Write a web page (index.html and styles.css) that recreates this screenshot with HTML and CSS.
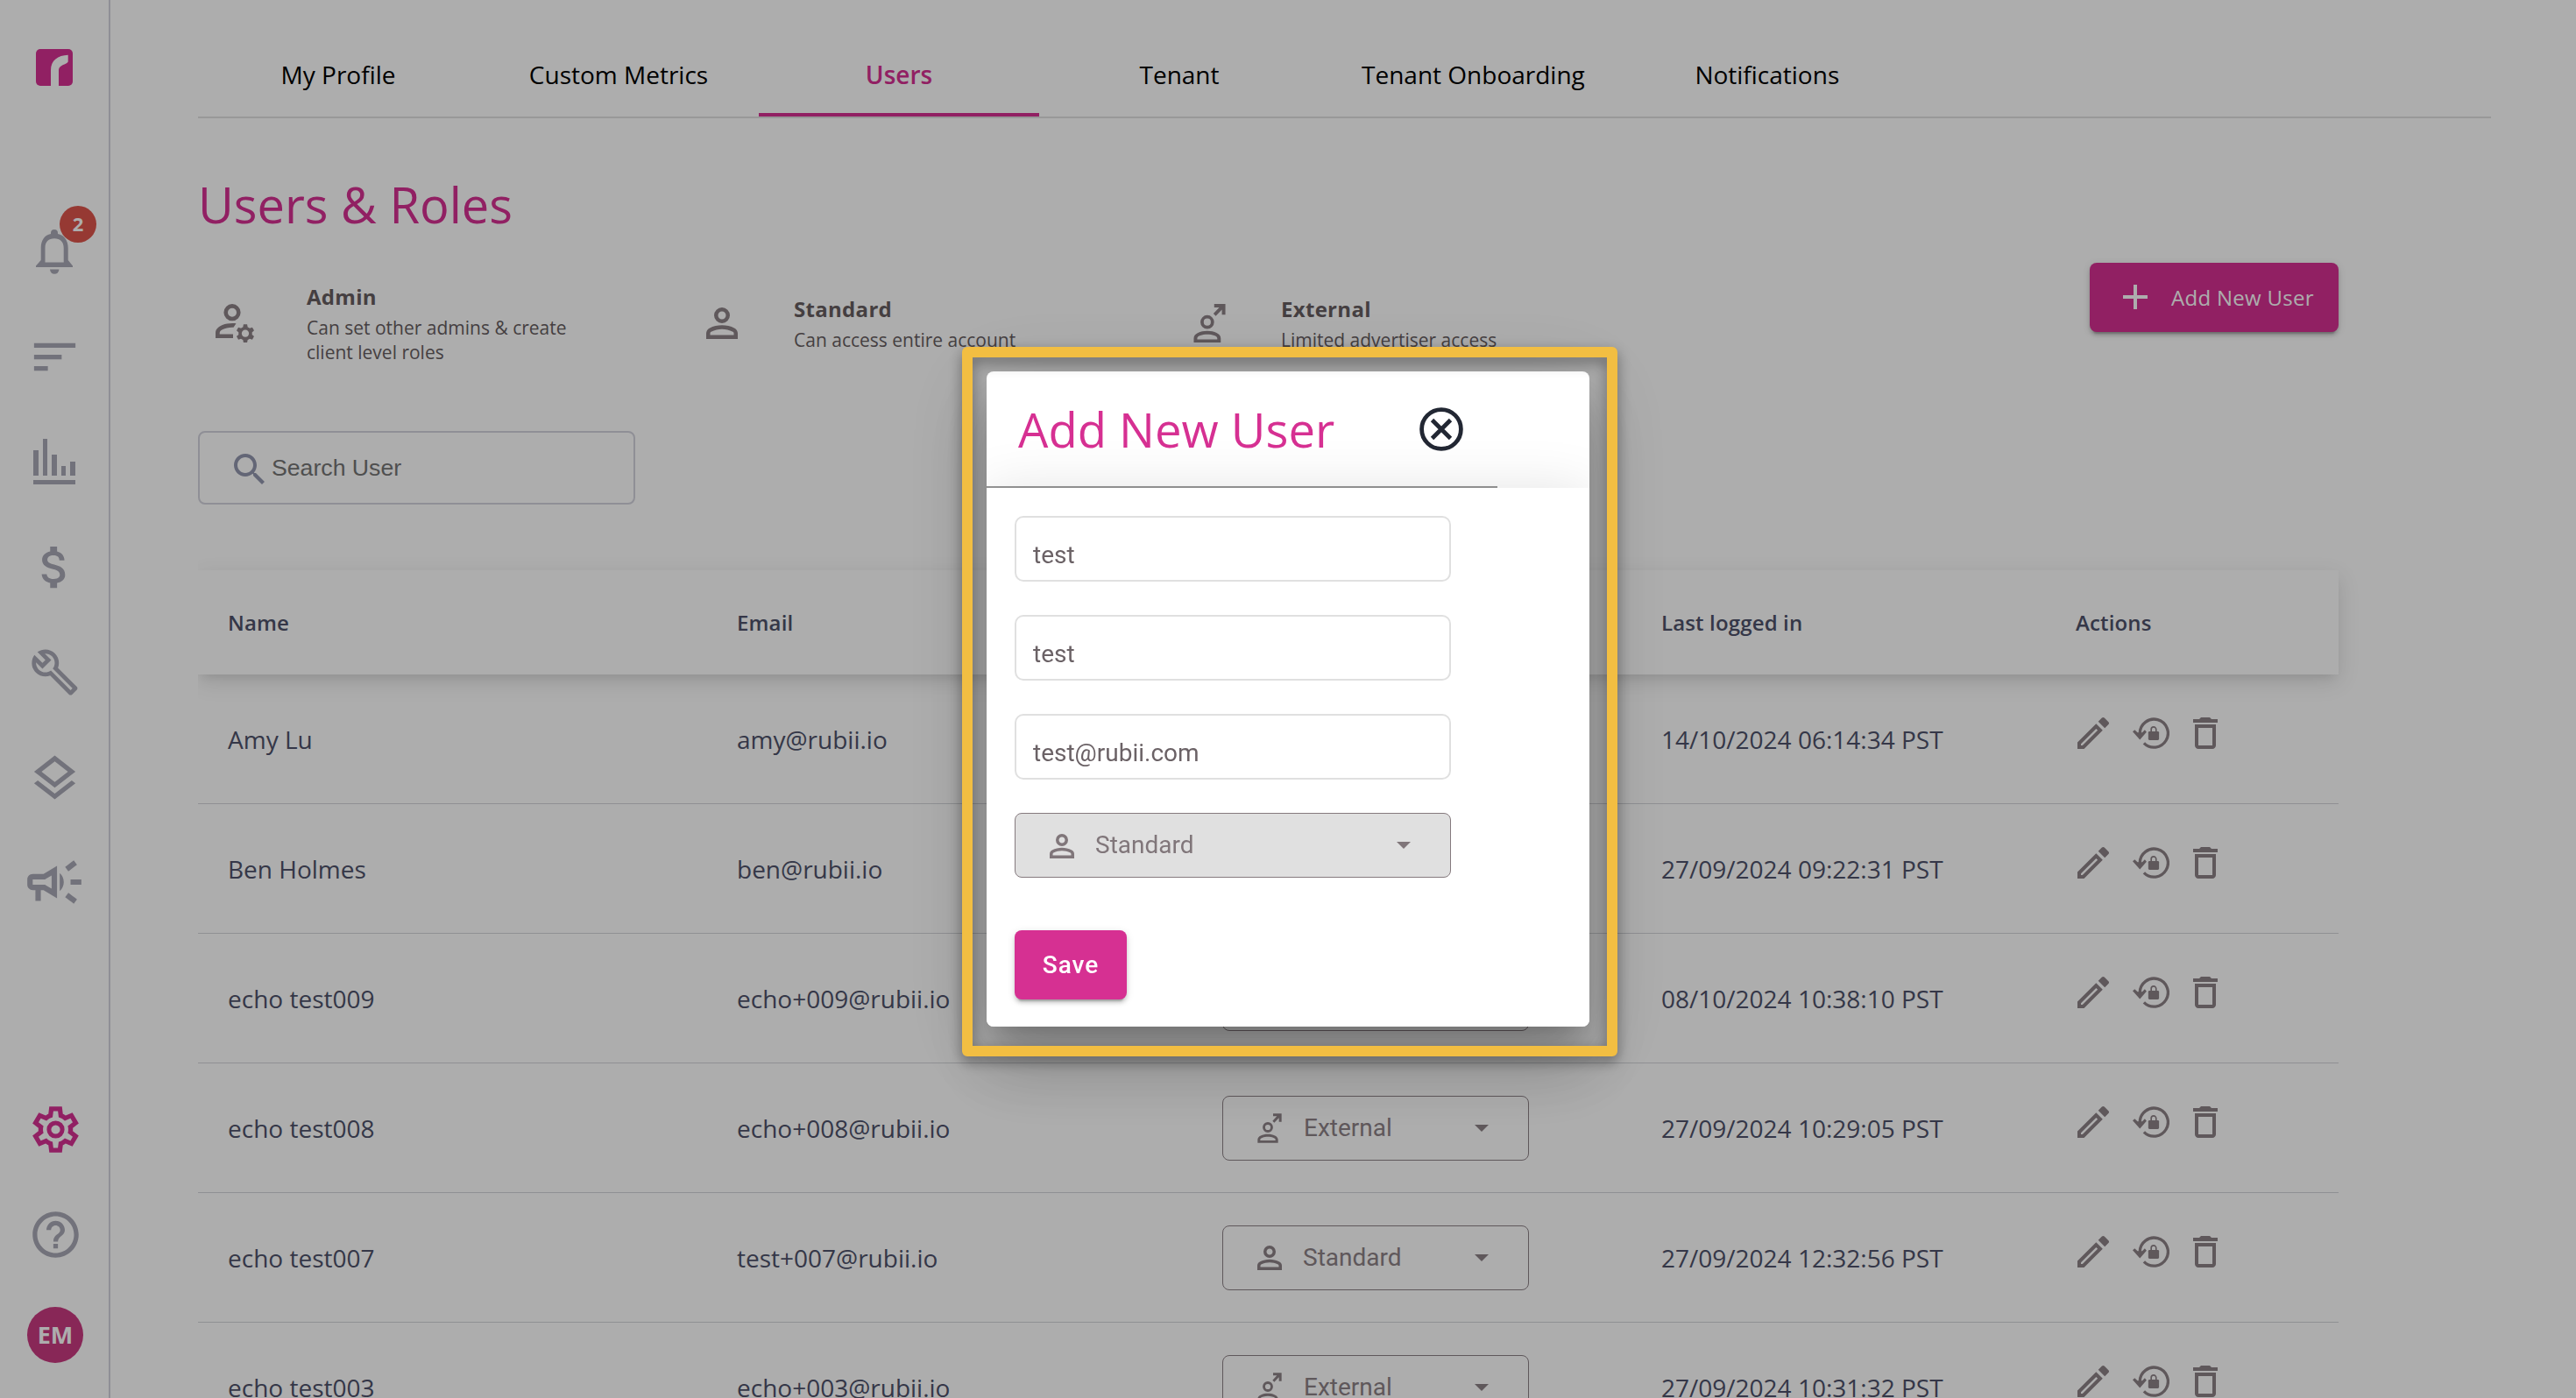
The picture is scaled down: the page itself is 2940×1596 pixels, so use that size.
FILE: index.html
```html
<!DOCTYPE html>
<html lang="en">
<head>
  <meta charset="utf-8">
  <title>Users &amp; Roles</title>
  <link rel="stylesheet" href="styles.css">
</head>
<body>
  <!-- Shared icons -->
  <svg class="sprite">
    <symbol id="person" viewBox="160 -800 640 640"><path d="M480-480q-66 0-113-47t-47-113q0-66 47-113t113-47q66 0 113 47t47 113q0 66-47 113t-113 47ZM160-160v-112q0-34 17.5-62.5T224-378q62-31 126-46.5T480-440q66 0 130 15.5T736-378q29 15 46.5 43.5T800-272v112H160Zm80-80h480v-32q0-11-5.5-20T700-306q-54-27-109-40.5T480-360q-56 0-111 13.5T260-306q-9 5-14.5 14t-5.5 20v32Zm240-320q33 0 56.5-23.5T560-640q0-33-23.5-56.5T480-720q-33 0-56.5 23.5T400-640q0 33 23.5 56.5T480-560Z"/></symbol>
    <symbol id="external" viewBox="0 0 84 100">
      <path d="M54 0H83V28H74V15L58 31L52 25L67 9H54Z"/>
      <circle cx="36" cy="47" r="13.5" fill="none" stroke="currentColor" stroke-width="8.5"/>
      <path fill-rule="evenodd" d="M1 100V89C1 77 18 70 36 70S71 77 71 89V100ZM10 92H62V89C62 83 49 79 36 79S10 83 10 89Z"/>
    </symbol>
    <symbol id="edit" viewBox="3 3 18 18"><path d="M3 17.250V21h3.750L17.400 10.350l-3.750-3.750zM5.900 19H5v-.9l8.650-8.650.9.900zM17.660 3c-.25 0-.51.1-.7.29l-2.100 2.100 3.750 3.750 2.100-2.100c.39-.39.39-1.020 0-1.410l-2.340-2.340c-.2-.2-.45-.29-.71-.29z" fill-rule="evenodd"/></symbol>
    <symbol id="reset" viewBox="0 0 127 108">
      <path fill="none" stroke="currentColor" stroke-width="10" d="M25 66V54A48.500 48.500 0 1 1 39 88.500"/>
      <path d="M0 49L7 43L17 52H33L42 43L48 50L25 77Z"/>
      <rect x="54" y="48" width="37" height="30" rx="4"/>
      <path fill="none" stroke="currentColor" stroke-width="5" d="M64 50V41a8.500 8.500 0 0 1 17 0V50"/>
    </symbol>
    <symbol id="trash" viewBox="5 3 14 18"><path d="M6 19c0 1.1.9 2 2 2h8c1.1 0 2-.9 2-2V7H6v12zM8 9h8v10H8V9zm7.500-5l-1-1h-5l-1 1H5v2h14V4z"/></symbol>
  </svg>

  <div class="page">
    <aside class="sidebar">
      <svg class="logo" viewBox="0 0 42 42"><rect width="42" height="42" rx="5"/><path fill="#fff" d="M17 42V24C17 13 25 7 36.700 6.700V14.500C35 17 33 17 31 18C28 19.500 26 21 26 24V42Z"/></svg>
      <div class="bell">
        <svg viewBox="0 0 42 51"><path fill-rule="evenodd" d="M0 43V41.500L5.700 35V21C5.700 12 10 6.500 17 5V4a4 4 0 0 1 8 0V5C32 6.500 36.700 12 36.700 21V35L42 41.500V43ZM10.500 37.500H31.700V21C31.700 14 27.500 10.300 21 10.300S10.500 14 10.500 21Z"/><path d="M16 45.500h10.400a5.200 5.200 0 0 1-10.400 0z"/></svg>
        <span class="badge">2</span>
      </div>
      <nav class="side-nav">
        <a><svg viewBox="0 0 24 24"><path d="M3 18h6v-2H3v2zM3 6v2h18V6H3zm0 7h12v-2H3v2z"/></svg></a>
        <a><svg class="chart" viewBox="0 0 48 52"><path d="M0 13h6v29H0zM11 0h5v42h-5zM21 18h6v24h-6zM32 31h5v11h-5zM42 26h6v16h-6zM0 47h48v5H0z"/></svg></a>
        <a><svg viewBox="0 0 24 24"><path d="M11.800 10.900c-2.270-.59-3-1.200-3-2.150 0-1.090 1.010-1.850 2.700-1.850 1.780 0 2.440.85 2.500 2.100h2.210c-.07-1.720-1.120-3.300-3.210-3.810V3h-3v2.160c-1.940.42-3.500 1.680-3.500 3.610 0 2.310 1.910 3.460 4.700 4.130 2.500.6 3 1.480 3 2.410 0 .69-.49 1.790-2.700 1.790-2.060 0-2.870-.92-2.980-2.100h-2.200c.12 2.190 1.760 3.420 3.680 3.830V21h3v-2.150c1.950-.37 3.500-1.500 3.500-3.550 0-2.840-2.430-3.810-4.700-4.400z"/></svg></a>
        <a><svg class="wrench" viewBox="0 0 24 24"><path d="M22.610 18.990l-9.080-9.080c.93-2.340.45-5.100-1.440-7C9.790.61 6.210.4 3.660 2.260L7.500 6.110 6.080 7.520 2.250 3.690C.39 6.230.6 9.820 2.900 12.110c1.860 1.860 4.570 2.350 6.890 1.480l9.110 9.110c.39.39 1.020.39 1.410 0l2.300-2.300c.4-.38.4-1.010 0-1.410zm-3 1.600l-9.460-9.460c-.61.45-1.290.72-2 .82-1.360.2-2.790-.21-3.830-1.250C3.370 9.760 2.930 8.500 3 7.260l3.090 3.090 4.240-4.240-3.090-3.090c1.240-.07 2.490.37 3.440 1.310 1.080 1.080 1.490 2.570 1.240 3.960-.12.71-.42 1.370-.88 1.960l9.450 9.450-.88.89z"/></svg></a>
        <a><svg viewBox="0 -.5 24 24"><path d="M11.990 18.540l-7.370-5.730L3 14.070l9 7 9-7-1.630-1.270-7.380 5.740zM12 16l7.360-5.730L21 9l-9-7-9 7 1.630 1.270L12 16zm0-11.470L17.740 9 12 13.470 6.260 9 12 4.530z"/></svg></a>
        <a><svg class="campaign" viewBox="0 0 24 24"><path d="M18 11v2h4v-2h-4zm-2 6.610c.96.71 2.210 1.650 3.200 2.390.4-.53.8-1.070 1.200-1.600-.99-.74-2.240-1.680-3.200-2.400-.4.54-.8 1.080-1.200 1.610zM20.400 5.600c-.4-.53-.8-1.070-1.200-1.600-.99.74-2.240 1.680-3.200 2.400.4.53.8 1.070 1.200 1.600.96-.72 2.210-1.650 3.200-2.400zM4 9c-1.100 0-2 .9-2 2v2c0 1.100.9 2 2 2h1v4h2v-4h1l5 3V6L8 9H4zm5.030 1.710L11 9.530v4.940l-1.970-1.180-.48-.29H4v-2h4.550l.48-.29zM15.500 12c0-1.330-.58-2.530-1.500-3.350v6.690c.92-.81 1.500-2.010 1.500-3.340z"/></svg></a>
      </nav>
      <nav class="side-nav side-nav-bottom">
        <a class="active"><svg viewBox="0 -960 960 960"><path fill-rule="evenodd" d="m370-80-16-128q-13-5-24.500-12T307-235l-119 50L78-375l103-78q-1-7-1-13.500v-27q0-6.500 1-13.500L78-585l110-190 119 50q11-8 23-15t24-12l16-128h220l16 128q13 5 24.500 12t22.500 15l119-50 110 190-103 78q1 7 1 13.500v27q0 6.500-2 13.500l103 78-110 190-118-50q-11 8-23 15t-24 12L590-80H370Zm70-80h79l14-106q31-8 57.500-23.500T639-327l99 41 39-68-86-65q5-14 7-29.500t2-31.500q0-16-2-31.500t-7-29.500l86-65-39-68-99 42q-22-23-48.500-38.500T533-694l-13-106h-79l-14 106q-31 8-57.500 23.500T321-633l-99-41-39 68 86 64q-5 15-7 30t-2 32q0 16 2 31t7 30l-86 65 39 68 99-42q22 23 48.500 38.500T427-266l13 106Z"/><circle cx="480" cy="-480" r="116" fill="none" stroke="currentColor" stroke-width="76"/></svg></a>
        <a><svg viewBox="0 0 24 24"><path d="M11 18h2v-2h-2v2zm1-16C6.480 2 2 6.480 2 12s4.480 10 10 10 10-4.480 10-10S17.520 2 12 2zm0 18c-4.410 0-8-3.590-8-8s3.590-8 8-8 8 3.590 8 8-3.590 8-8 8zm0-14c-2.210 0-4 1.790-4 4h2c0-1.100.9-2 2-2s2 .9 2 2c0 2-3 1.750-3 5h2c0-2.250 3-2.500 3-5 0-2.210-1.790-4-4-4z"/></svg></a>
      </nav>
      <div class="avatar">EM</div>
    </aside>

    <main class="content">
      <nav class="tabs">
        <a class="tab">My Profile</a>
        <a class="tab">Custom Metrics</a>
        <a class="tab selected">Users</a>
        <a class="tab">Tenant</a>
        <a class="tab">Tenant Onboarding</a>
        <a class="tab">Notifications</a>
      </nav>

      <h1>Users &amp; Roles</h1>

      <div class="top-row">
        <div class="roles">
          <div class="role">
            <div class="role-icon">
              <svg width="44" height="44" viewBox="0 0 44 44">
                <circle cx="19" cy="9.700" r="7.300" fill="none" stroke="currentColor" stroke-width="4.600"/>
                <path d="M23.500 22.200C10 21 0 26 0 33V39H20V34.400H4.700V33C4.700 29.500 13 26.300 20.500 26.800Z"/>
                <path transform="translate(-1.200 .6) scale(2.070)" d="M20.750 16c0-.22-.03-.42-.06-.63l1.140-1.010-1-1.730-1.450.49c-.32-.27-.68-.48-1.080-.63L18 11h-2l-.3 1.490c-.4.15-.76.36-1.080.63l-1.450-.49-1 1.730 1.140 1.010c-.03.21-.06.41-.06.63s.03.42.06.63l-1.140 1.010 1 1.730 1.450-.49c.32.27.68.48 1.080.63L16 21h2l.3-1.490c.4-.15.76-.36 1.080-.63l1.450.49 1-1.730-1.140-1.010c.03-.21.06-.41.06-.63zM17 18c-1.100 0-2-.9-2-2s.9-2 2-2 2 .9 2 2-.9 2-2 2z"/>
              </svg>
            </div>
            <div>
              <h3>Admin</h3>
              <p>Can set other admins &amp; create<br>client level roles</p>
            </div>
          </div>
          <div class="role">
            <div class="role-icon"><svg width="36" height="36"><use href="#person"/></svg></div>
            <div>
              <h3>Standard</h3>
              <p>Can access entire account</p>
            </div>
          </div>
          <div class="role">
            <div class="role-icon"><svg width="37" height="44"><use href="#external"/></svg></div>
            <div>
              <h3>External</h3>
              <p>Limited advertiser access</p>
            </div>
          </div>
        </div>
        <button class="add-btn">
          <svg width="28" height="28" viewBox="0 0 28 28"><path d="M12 0h4v12h12v4H16v12h-4V16H0v-4h12z"/></svg>
          Add New User
        </button>
      </div>

      <div class="search">
        <svg width="48" height="48" viewBox="0 0 24 24"><path d="M15.500 14h-.79l-.28-.27C15.410 12.590 16 11.110 16 9.500 16 5.910 13.090 3 9.500 3S3 5.910 3 9.500 5.910 16 9.500 16c1.610 0 3.090-.59 4.230-1.570l.27.28v.79l5 4.990L20.490 19l-4.990-5zm-6 0C7.010 14 5 11.990 5 9.500S7.010 5 9.500 5 14 7.010 14 9.500 11.990 14 9.500 14z"/></svg>
        <span>Search User</span>
      </div>

      <div class="table">
        <div class="row head">
          <div>Name</div><div>Email</div><div></div><div>Last logged in</div><div>Actions</div>
        </div>
        <div class="row">
          <div>Amy Lu</div><div>amy@rubii.io</div><div></div><div>14/10/2024 06:14:34 PST</div>
          <div class="actions"><svg class="edit"><use href="#edit"/></svg><svg class="reset"><use href="#reset"/></svg><svg class="trash"><use href="#trash"/></svg></div>
        </div>
        <div class="row">
          <div>Ben Holmes</div><div>ben@rubii.io</div><div></div><div>27/09/2024 09:22:31 PST</div>
          <div class="actions"><svg class="edit"><use href="#edit"/></svg><svg class="reset"><use href="#reset"/></svg><svg class="trash"><use href="#trash"/></svg></div>
        </div>
        <div class="row">
          <div>echo test009</div><div>echo+009@rubii.io</div>
          <div><div class="select"></div></div>
          <div>08/10/2024 10:38:10 PST</div>
          <div class="actions"><svg class="edit"><use href="#edit"/></svg><svg class="reset"><use href="#reset"/></svg><svg class="trash"><use href="#trash"/></svg></div>
        </div>
        <div class="row">
          <div>echo test008</div><div>echo+008@rubii.io</div>
          <div><div class="select"><svg class="ext"><use href="#external"/></svg><span>External</span><i class="caret"></i></div></div>
          <div>27/09/2024 10:29:05 PST</div>
          <div class="actions"><svg class="edit"><use href="#edit"/></svg><svg class="reset"><use href="#reset"/></svg><svg class="trash"><use href="#trash"/></svg></div>
        </div>
        <div class="row">
          <div>echo test007</div><div>test+007@rubii.io</div>
          <div><div class="select"><svg class="std"><use href="#person"/></svg><span>Standard</span><i class="caret"></i></div></div>
          <div>27/09/2024 12:32:56 PST</div>
          <div class="actions"><svg class="edit"><use href="#edit"/></svg><svg class="reset"><use href="#reset"/></svg><svg class="trash"><use href="#trash"/></svg></div>
        </div>
        <div class="row">
          <div>echo test003</div><div>echo+003@rubii.io</div>
          <div><div class="select"><svg class="ext"><use href="#external"/></svg><span>External</span><i class="caret"></i></div></div>
          <div>27/09/2024 10:31:32 PST</div>
          <div class="actions"><svg class="edit"><use href="#edit"/></svg><svg class="reset"><use href="#reset"/></svg><svg class="trash"><use href="#trash"/></svg></div>
        </div>
      </div>
    </main>
  </div>

  <div class="overlay">
    <div class="dialog">
      <div class="dialog-header">
        <h2>Add New User</h2>
        <svg class="close" width="50" height="50" viewBox="0 0 50 50"><circle cx="25" cy="25" r="22.400"/><path d="M14.500 14.500l21 21m0-21l-21 21"/></svg>
      </div>
      <div class="dialog-body">
        <div class="field">test</div>
        <div class="field">test</div>
        <div class="field">test@rubii.com</div>
        <div class="select disabled"><svg class="std"><use href="#person"/></svg><span>Standard</span><i class="caret"></i></div>
        <button class="save-btn">Save</button>
      </div>
    </div>
    <div class="highlight"></div>
  </div>
</body>
</html>
```
FILE: styles.css
```css
* {
  box-sizing: border-box;
}
body {
  margin: 0;
  height: 1596px;
  overflow: hidden;
  background: #fff;
  font-family: "Open Sans", "Noto Sans", sans-serif;
  color: #4e526a;
}
h1, h2, h3, p {
  margin: 0;
}
svg {
  display: block;
  fill: currentColor;
  flex: none;
}
.sprite {
  position: absolute;
  width: 0;
  height: 0;
}
.page {
  display: flex;
  height: 1596px;
  overflow: hidden;
}

/* Sidebar */
.sidebar {
  display: flex;
  flex-direction: column;
  align-items: center;
  flex: none;
  width: 126px;
  border-right: 2px solid #d3d3dd;
  color: #a9a9b5;
}
.logo {
  width: 42px;
  height: 42px;
  margin-top: 56px;
  color: #d63092;
}
.bell {
  position: relative;
  width: 42px;
  height: 51px;
  margin-top: 164px;
}
.badge {
  position: absolute;
  top: -27px;
  left: 27px;
  width: 42px;
  height: 42px;
  border-radius: 50%;
  background: #dd554c;
  color: #fff;
  font-size: 22px;
  font-weight: 700;
  line-height: 41px;
  text-align: center;
}
.side-nav {
  margin-top: 34px;
}
.side-nav a {
  display: flex;
  align-items: center;
  justify-content: center;
  height: 120px;
}
.side-nav svg {
  width: 63px;
  height: 63px;
}
.side-nav .chart {
  width: 48px;
  height: 52px;
}
.side-nav .wrench {
  width: 57px;
  height: 57px;
}
.side-nav .campaign {
  width: 74px;
  height: 74px;
}
.side-nav-bottom {
  margin: 162px 0 0 2px;
}
.side-nav .active {
  color: #d63092;
}
.avatar {
  width: 64px;
  height: 64px;
  margin: 23px 0 0 2px;
  border-radius: 50%;
  background: #c93a80;
  color: #fff;
  font-size: 27px;
  font-weight: 700;
  line-height: 63px;
  text-align: center;
}

/* Content */
.content {
  width: 2617px;
  margin-left: 100px;
}
.tabs {
  display: flex;
  height: 135px;
  padding-top: 37px;
  border-bottom: 2px solid #e0e0e0;
}
.tab {
  min-width: 320px;
  padding: 0 48px;
  font-size: 28px;
  font-weight: 500;
  line-height: 97px;
  text-align: center;
  color: #000;
}
.tab.selected {
  color: #d63092;
  font-weight: 600;
  border-bottom: 4px solid #d63092;
}
h1, h2 {
  font-size: 56px;
  font-weight: 400;
  line-height: 76px;
  color: #d63092;
}
h1 {
  margin-top: 60px;
}
.top-row {
  display: flex;
  justify-content: space-between;
  align-items: flex-start;
  width: 2443px;
  margin-top: 50px;
}
.roles {
  display: flex;
}
.role {
  display: flex;
  align-items: center;
  width: 556px;
  height: 96px;
  color: #665d61;
}
.role-icon {
  display: flex;
  justify-content: center;
  width: 84px;
  margin-right: 40px;
  color: #8d8287;
}
.role h3 {
  font-size: 24px;
  font-weight: 700;
  line-height: 34px;
  letter-spacing: .3px;
  padding-bottom: 4px;
}
.role p {
  font-size: 21px;
  line-height: 28.5px;
}
.add-btn {
  display: flex;
  align-items: center;
  gap: 27px;
  width: 284px;
  height: 79px;
  margin-top: -21px;
  padding: 0 0 1px 38px;
  border: none;
  border-radius: 8px;
  background: #d63092;
  color: #fff;
  font: 400 24px "Open Sans", sans-serif;
  letter-spacing: .3px;
  white-space: nowrap;
  box-shadow: 0 6px 2px -4px rgba(0,0,0,.2), 0 4px 4px 0 rgba(0,0,0,.14), 0 2px 10px 0 rgba(0,0,0,.12);
}
.search {
  display: flex;
  align-items: center;
  width: 499px;
  height: 84px;
  margin-top: 75px;
  padding-left: 33px;
  border: 2px solid #d3d3dd;
  border-radius: 8px;
  font-family: "Liberation Sans", Arial, sans-serif;
  font-size: 26.67px;
  color: #757575;
}
.search svg {
  color: #9397ae;
  margin: 4px 1px 0 0;
}

/* Users table */
.table {
  width: 2443px;
  margin-top: 75px;
}
.row {
  display: grid;
  grid-template-columns: 581px 554px 501px 473px 1fr;
  align-items: center;
  height: 148px;
  padding-left: 34px;
  border-bottom: 1px solid #d3d5d9;
  font-size: 28px;
}
.row.head {
  height: 119px;
  border-bottom: none;
  font-size: 24px;
  font-weight: 600;
  letter-spacing: .15px;
  box-shadow: 0 8px 10px -4px rgba(0,0,0,.06), 0 8px 24px 0 rgba(0,0,0,.12);
  clip-path: inset(-30px -30px -40px 0);
}
.actions {
  display: flex;
  gap: 27px;
  padding-left: 2px;
  margin-top: -13px;
  color: #8d8287;
}
.edit {
  width: 36px;
  height: 36px;
}
.reset {
  width: 42px;
  height: 36px;
}
.trash {
  width: 28px;
  height: 36px;
}
.select {
  display: flex;
  align-items: center;
  width: 350px;
  height: 74px;
  padding: 0 45px 0 39px;
  border: 1px solid #8d8287;
  border-radius: 8px;
  font-family: Roboto, sans-serif;
  font-size: 28px;
  line-height: 36px;
  color: #8d8287;
}
.select span {
  flex: 1;
}
.ext {
  width: 28px;
  height: 34px;
  margin-right: 25px;
}
.std {
  width: 28px;
  height: 28px;
  margin: 1px 24px 0 0;
}
.caret {
  border: 8.5px solid transparent;
  border-top-color: currentColor;
  border-bottom: none;
}

/* Dialog */
.overlay {
  position: fixed;
  inset: 0;
  display: flex;
  align-items: center;
  justify-content: center;
  background: rgba(0,0,0,.32);
}
.dialog {
  width: 688px;
  height: 748px;
  border-radius: 8px;
  background: #fff;
  box-shadow: 0 22px 30px -14px rgba(0,0,0,.2), 0 48px 76px 6px rgba(0,0,0,.14), 0 18px 92px 16px rgba(0,0,0,.12);
  overflow: hidden;
}
.dialog-header {
  display: flex;
  align-items: center;
  justify-content: space-between;
  width: 583px;
  height: 133px;
  padding: 1px 39px 0 36px;
  border-bottom: 2px solid #979797;
}
.dialog-header h2 {
  font-size: 54.4px;
}
.close {
  fill: none;
  stroke: #222733;
  stroke-width: 4.8;
}
.dialog-body {
  height: 615px;
  padding: 32px;
  background: #fff;
  box-shadow: 0 4px 60px rgba(0,0,0,.12);
}
.field {
  width: 498px;
  height: 75px;
  margin-bottom: 38px;
  padding: 13px 0 0 19px;
  border: 2px solid #e0e0e0;
  border-radius: 10px;
  font-family: Roboto, sans-serif;
  font-size: 28px;
  line-height: 60px;
  color: #6b6266;
}
.select.disabled {
  width: 498px;
  border-color: #857a7e;
  background: #e0e0e0;
  color: #80767a;
}
.save-btn {
  width: 128px;
  height: 79px;
  margin-top: 60px;
  padding: 0;
  border: none;
  border-radius: 8px;
  background: #d63092;
  color: #fff;
  font: 500 28px Roboto, sans-serif;
  letter-spacing: 1px;
  box-shadow: 0 6px 2px -4px rgba(0,0,0,.2), 0 4px 4px 0 rgba(0,0,0,.14), 0 2px 10px 0 rgba(0,0,0,.12);
}
.highlight {
  position: absolute;
  left: 1098px;
  top: 396px;
  width: 748px;
  height: 810px;
  border: 12px solid #f2be42;
  border-radius: 6px;
  filter: drop-shadow(0 6px 8px rgba(0,0,0,.4));
}
```
